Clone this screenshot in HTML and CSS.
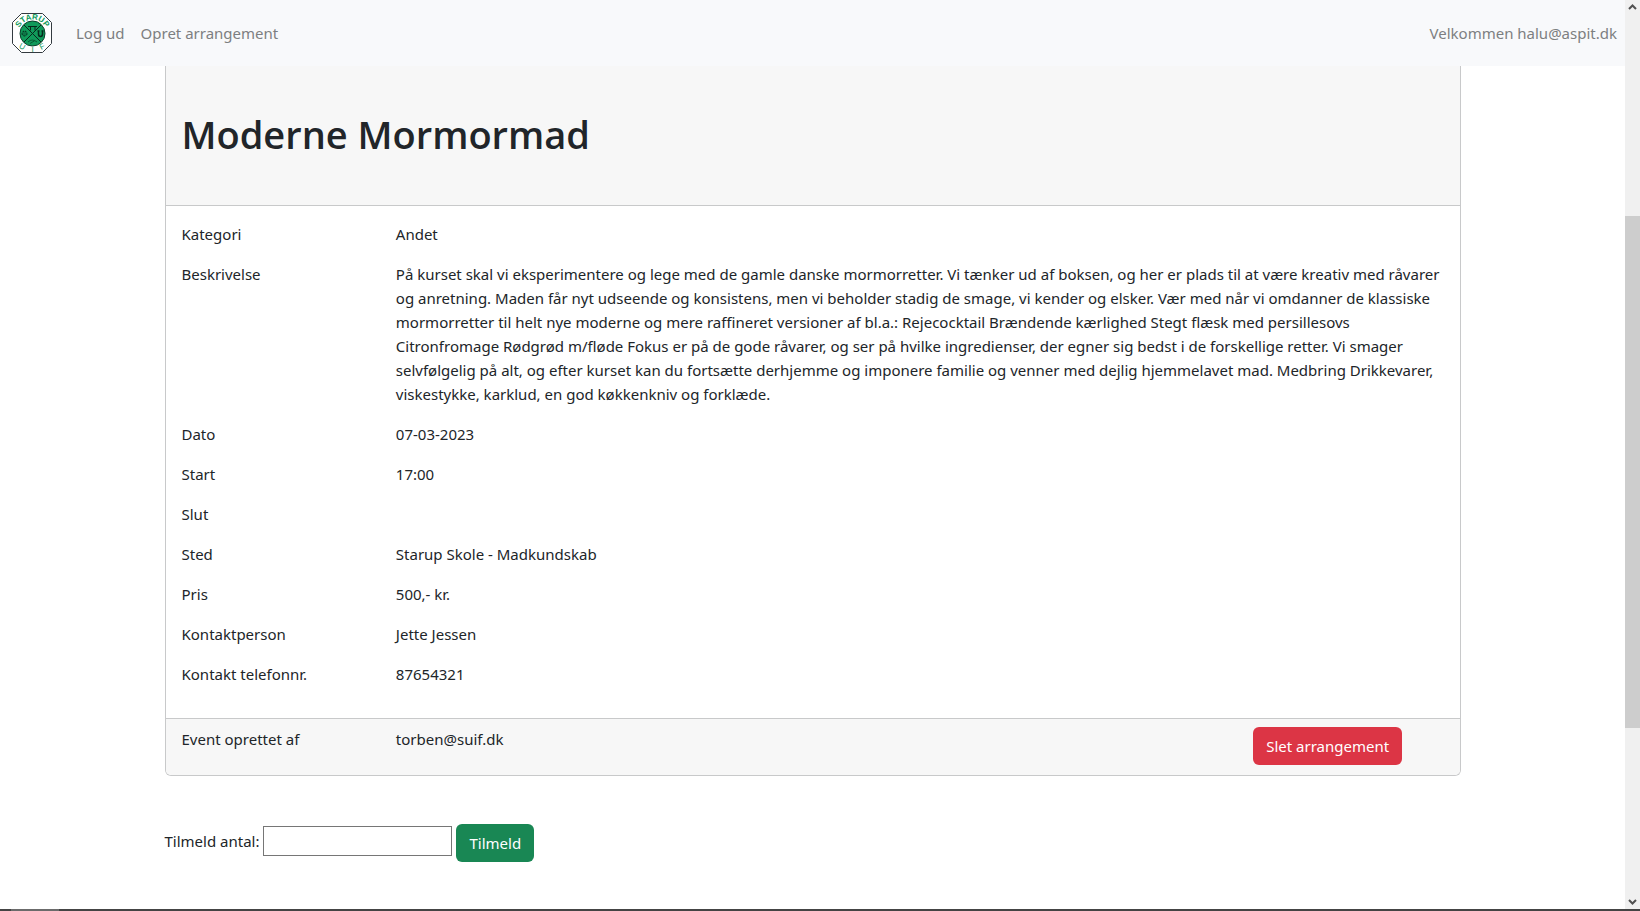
FILE: index.html
```html
<!DOCTYPE html>
<html lang="da">
<head>
<meta charset="utf-8">
<title>Moderne Mormormad</title>
<link rel="stylesheet" href="styles.css">
</head>
<body>
<div class="window">
  <div class="page">
    <nav class="navbar">
      <a class="brand" href="#" aria-label="Starup UIF">
        <svg class="logo" viewBox="0 0 40 40" width="40" height="40">
          <path d="M9.500 .5h21l9 9v21l-9 9h-21l-9-9v-21z" fill="#fff" stroke="#333b40"/>
          <defs><path id="arc" d="M6.500 20a14 13.500 0 0 1 28 0"/></defs>
          <text class="logo-name"><textPath href="#arc" startOffset="50%" text-anchor="middle">STARUP</textPath></text>
          <circle cx="20.500" cy="20.500" r="12.500" fill="#109a5a" stroke="#0b3d29"/>
          <path d="M12 12l17 17M29 12l-17 17" stroke="#062a1b"/>
          <path d="M16 13.500h9M18.500 13.500v4M23 13.500v4" stroke="#062a1b" fill="none"/>
          <circle cx="12.500" cy="20.500" r="2.500" fill="#0d7546" stroke="#062a1b" stroke-dasharray="2 1"/>
          <path d="M26.500 18v3q0 2.500 2 2.500t2-2.500v-3M25.500 18h2M29.500 18h2" stroke="#062a1b" stroke-width="1.500" fill="none"/>
          <path d="M16 29q4-4 9 0M18 30.500l5-3" stroke="#075a34" fill="none"/>
          <text class="logo-letter" x="10" y="36" transform="rotate(28 10 34)">U</text>
          <text class="logo-letter" x="20.500" y="39">I</text>
          <text class="logo-letter" x="30.500" y="36" transform="rotate(-28 30.500 34)">F</text>
        </svg>
      </a>
      <a class="nav-link" href="#">Log ud</a>
      <a class="nav-link" href="#">Opret arrangement</a>
      <span class="welcome">Velkommen halu@aspit.dk</span>
    </nav>
    <main class="container">
      <article class="card">
        <header class="card-header"><h1 class="title">Moderne Mormormad</h1></header>
        <dl class="card-body">
          <dt>Kategori</dt><dd>Andet</dd>
          <dt>Beskrivelse</dt>
          <dd>På kurset skal vi eksperimentere og lege med de gamle danske mormorretter. Vi tænker ud af boksen, og her er plads til at være kreativ med råvarer<br>
          og anretning. Maden får nyt udseende og konsistens, men vi beholder stadig de smage, vi kender og elsker. Vær med når vi omdanner de klassiske<br>
          mormorretter til helt nye moderne og mere raffineret versioner af bl.a.: Rejecocktail Brændende kærlighed Stegt flæsk med persillesovs<br>
          Citronfromage Rødgrød m/fløde Fokus er på de gode råvarer, og ser på hvilke ingredienser, der egner sig bedst i de forskellige retter. Vi smager<br>
          selvfølgelig på alt, og efter kurset kan du fortsætte derhjemme og imponere familie og venner med dejlig hjemmelavet mad. Medbring Drikkevarer,<br>
          viskestykke, karklud, en god køkkenkniv og forklæde.</dd>
          <dt>Dato</dt><dd>07-03-2023</dd>
          <dt>Start</dt><dd>17:00</dd>
          <dt>Slut</dt><dd></dd>
          <dt>Sted</dt><dd>Starup Skole - Madkundskab</dd>
          <dt>Pris</dt><dd>500,- kr.</dd>
          <dt>Kontaktperson</dt><dd>Jette Jessen</dd>
          <dt>Kontakt telefonnr.</dt><dd>87654321</dd>
        </dl>
        <footer class="card-footer">
          <span>Event oprettet af</span>
          <span>torben@suif.dk</span>
          <div><button class="btn btn-danger" type="button">Slet arrangement</button></div>
        </footer>
      </article>
      <form class="signup">
        <div class="field">
          <label for="antal">Tilmeld antal:</label>
          <input class="amount" id="antal" type="text">
        </div>
        <button class="btn btn-success" type="button">Tilmeld</button>
      </form>
    </main>
  </div>
  <div class="scrollbar" aria-hidden="true">
    <svg class="arrow" viewBox="0 0 9 6" width="9" height="6"><path d="M1 5l3.500-3.500L8 5" /></svg>
    <div class="track"><div class="thumb"></div></div>
    <svg class="arrow" viewBox="0 0 9 6" width="9" height="6"><path d="M1 1l3.500 3.500L8 1" /></svg>
  </div>
</div>
<div class="taskbar" aria-hidden="true"><div class="task"></div></div>
</body>
</html>
```
FILE: styles.css
```css
* { box-sizing: border-box; }

body {
  margin: 0;
  min-height: 100vh;
  display: flex;
  flex-direction: column;
  font: 15px/24px "Noto Sans", "Open Sans", sans-serif;
  color: #212529;
  background: #fff;
}

.window { flex: 1; display: flex; }
.page { flex: 1; min-width: 0; }

.navbar {
  display: flex;
  align-items: center;
  gap: 16px;
  height: 66px;
  padding: 0 8px 0 12px;
  background: #f8f9fb;
  color: #7d7f81;
}
.brand { display: flex; margin-right: 8px; }
.logo-name { font: bold 8px "Liberation Sans", sans-serif; fill: #109a5a; }
.logo-letter { font: 8px "Liberation Sans", sans-serif; fill: #109a5a; text-anchor: middle; }
.nav-link { color: inherit; text-decoration: none; }
.welcome { margin-left: auto; }

.container { max-width: 1296px; margin: 0 auto; }

.card {
  border: 1px solid #c8c9ca;
  border-top: 0;
  border-radius: 0 0 6px 6px;
  overflow: hidden;
}
.card-header {
  padding: 44px 16px 47px;
  background: #f7f7f7;
  border-bottom: 1px solid #c8c9ca;
}
.title {
  margin: 0;
  font-family: "Open Sans", "Noto Sans", sans-serif;
  font-size: 38px;
  font-weight: 600;
  line-height: 48px;
}

.card-body {
  display: grid;
  grid-template-columns: calc((100% + 8px) / 6) 1fr;
  row-gap: 16px;
  margin: 0;
  padding: 16px 0 32px 16px;
}
.card-body dt, .card-body dd { margin: 0; min-height: 24px; white-space: nowrap; }

.card-footer {
  display: grid;
  grid-template-columns: calc((100% + 8px) / 6) calc((100% + 8px) * 4 / 6) 1fr;
  padding: 8px 0 10px 16px;
  background: #f7f7f7;
  border-top: 1px solid #c8c9ca;
}

.btn {
  height: 38px;
  padding: 0 13px;
  border: 0;
  border-radius: 6px;
  font: inherit;
  color: #fff;
}
.btn-danger { background: #dc3545; }
.btn-success { background: #198754; }

.signup {
  display: flex;
  align-items: center;
  gap: 4px;
  padding: 48px 0 16px;
}
.field {
  display: flex;
  align-items: center;
  gap: 4px;
  padding-bottom: 4px;
}
.amount {
  width: 189px;
  height: 30px;
  border: 1px solid #767676;
  padding: 1px 2px;
  font: inherit;
}

.scrollbar {
  width: 15px;
  display: flex;
  flex-direction: column;
  align-items: center;
  padding: 4px 0;
  background: #f0f0f0;
}
.arrow { fill: none; stroke: #505050; stroke-width: 2; }
.track {
  flex: 1;
  align-self: stretch;
  display: grid;
  grid-template-rows: 206fr 511fr 171fr;
}
.thumb { grid-row: 2; background: #cdcdcd; }

.taskbar { height: 2px; padding-left: 11px; background: #444; }
.task { width: 48px; height: 2px; background: #6b6b6b; }
```
